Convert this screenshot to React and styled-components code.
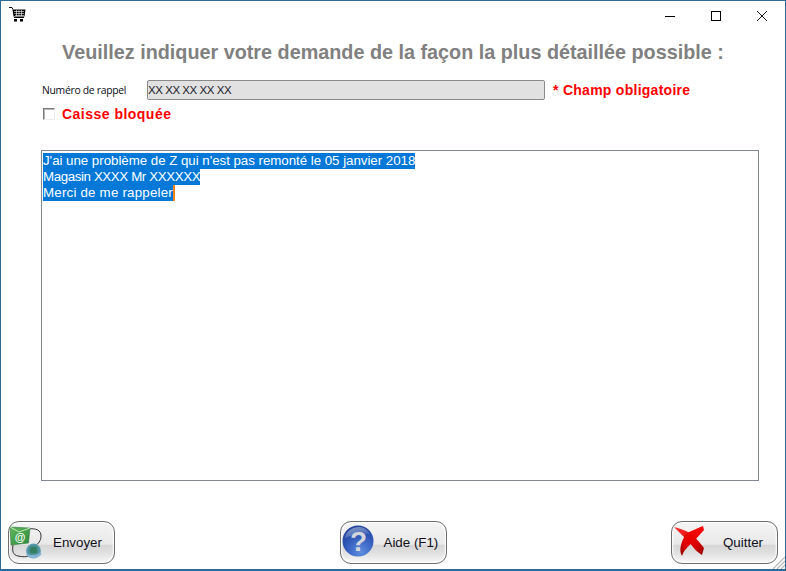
import React from 'react';
import styled, { createGlobalStyle } from 'styled-components';

const Global = createGlobalStyle`
  html, body { margin: 0; padding: 0; background: #fff; }
  * { box-sizing: border-box; }
`;

const Win = styled.div`
  position: relative;
  width: 786px;
  height: 571px;
  border: 1px solid #2f6a94;
  border-bottom-width: 2px;
  background: #fff;
  display: flex;
  flex-direction: column;
  font-family: "Liberation Sans", Arial, sans-serif;
  overflow: hidden;
`;

const TitleBar = styled.div`
  height: 30px;
  display: flex;
  align-items: flex-start;
  justify-content: space-between;
  padding: 6px 0 0 8px;
`;

const Controls = styled.div`
  display: flex;
  margin-top: -6px;
`;

const Ctrl = styled.div`
  width: 46px;
  height: 30px;
  display: flex;
  align-items: center;
  justify-content: center;
`;

const Heading = styled.h1`
  margin: 10px 0 0;
  height: 22px;
  font-size: 19.8px;
  line-height: 22px;
  font-weight: 700;
  color: #808080;
  text-align: center;
  white-space: nowrap;
`;

const Form = styled.div`
  padding: 17px 26px 0 40px;
  display: flex;
  flex-direction: column;
  flex: 1;
`;

const Row = styled.div`
  display: flex;
  align-items: center;
  height: 20px;
`;

const Label = styled.label`
  width: 106px;
  padding-left: 1px;
  font-family: "Open Sans", sans-serif;
  font-size: 10.4px;
  color: #0c0c20;
  white-space: nowrap;
  letter-spacing: -0.3px;
`;

const PhoneInput = styled.div`
  width: 398px;
  height: 20px;
  background: #e1e1e1;
  border: 1px solid #8a8a8a;
  border-radius: 2px;
  font-size: 11.5px;
  line-height: 18px;
  color: #1a1a2a;
  letter-spacing: -0.45px;
`;

const Required = styled.span`
  margin-left: 8px;
  font-size: 14px;
  font-weight: 700;
  color: #ff0000;
  letter-spacing: 0.27px;
  white-space: nowrap;
`;

const CheckRow = styled.div`
  display: flex;
  align-items: center;
  height: 16px;
  margin-top: 6px;
  padding-left: 2px;
`;

const Check = styled.span`
  width: 12px;
  height: 12px;
  background: #fff;
  border-top: 1px solid #7a7a7a;
  border-left: 1px solid #7a7a7a;
  border-right: 1px solid #ececec;
  border-bottom: 1px solid #ececec;
  box-shadow: inset 1px 1px 0 #b4b4b4;
`;

const CheckText = styled.span`
  margin-left: 7px;
  font-size: 14px;
  font-weight: 700;
  color: #ff0000;
  letter-spacing: 0.48px;
`;

const Memo = styled.div`
  margin-top: 28px;
  width: 718px;
  height: 331px;
  border: 1px solid #828790;
  padding: 2px 1px;
  font-size: 13.33px;
  line-height: 16px;
  color: #fff;
`;

const Line = styled.div`
  width: fit-content;
  height: 16px;
  background: #0078d7;
  white-space: nowrap;
  letter-spacing: ${p => p.$spacing || 0}px;
`;

const Caret = styled.span`
  display: inline-block;
  width: 2px;
  height: 16px;
  vertical-align: top;
  background: #f58220;
`;

const Footer = styled.div`
  display: flex;
  justify-content: space-between;
  padding: 0 7px 5px;
  height: 48px;
`;

const Btn = styled.button`
  position: relative;
  width: 107px;
  height: 43px;
  padding: 0;
  border: 1px solid #6e6e6e;
  border-radius: 11px;
  background: linear-gradient(#f4f4f4 0%, #e9e9e9 54%, #d6d6d6 57%, #e0e0e0 75%, #f8f8f8 100%);
  box-shadow: inset 0 0 2px 1px #fff;
  font-family: "Liberation Sans", Arial, sans-serif;
  font-size: 13.33px;
  color: #101018;
`;

const BtnIcon = styled.svg`
  position: absolute;
  left: ${p => p.$left}px;
  top: ${p => p.$top}px;
`;

const BtnText = styled.span`
  position: absolute;
  left: ${p => p.$left}px;
  top: 13px;
  line-height: 15px;
  white-space: nowrap;
`;

const Grip = styled.svg`
  position: absolute;
  right: 0;
  bottom: 0;
`;

function Cart() {
  return (
    <svg width="17" height="15" viewBox="0 0 17 15">
      <path d="M0 .5h3l1 2M5 10.5h10" fill="none" stroke="#000" />
      <path d="M3.5 2.5h13l-1 7h-11z" fill="#000" />
      <path d="M5 4.5h10M5.5 6.5h9.5M6 8.5h9M7.5 3v6M10 3v6M12.5 3v6" stroke="#fff" strokeWidth=".6" fill="none" />
      <rect x="5" y="12" width="3" height="2.5" fill="#000" />
      <rect x="11" y="12" width="3" height="2.5" fill="#000" />
    </svg>
  );
}

function MailIcon() {
  return (
    <BtnIcon $left={-1} $top={3} width="36" height="36" viewBox="0 0 36 36">
      <defs>
        <linearGradient id="env" x1="0" y1="0" x2="1" y2="1">
          <stop offset="0" stopColor="#62b85a" />
          <stop offset="1" stopColor="#2b8a3f" />
        </linearGradient>
        <radialGradient id="globe" cx=".5" cy=".45" r=".6">
          <stop offset="0" stopColor="#3f8f6c" />
          <stop offset=".55" stopColor="#4a8f9a" />
          <stop offset="1" stopColor="#8ab6d2" />
        </radialGradient>
      </defs>
      <path d="M20 4 C28 3 33 5 33 11 C33 16 30 19 28 20 M5 20 C4 26 5 30 10 31 C15 32 18 32 21 31" fill="none" stroke="#333" strokeWidth="1" />
      <path d="M2 2 L22 3 L20.5 18 L3 20 Z" fill="url(#env)" stroke="#1f6d30" strokeWidth=".5" />
      <path d="M2 2 L11 7 L22 3" fill="none" stroke="#d4f0cc" strokeWidth=".9" />
      <text x="12" y="15.5" textAnchor="middle" fontFamily="Liberation Sans" fontWeight="700" fontSize="11" fill="#fff">@</text>
      <circle cx="25.5" cy="26" r="7.5" fill="url(#globe)" />
      <path d="M18 30c3 4 11 4 15 0 1-1 0-3-1-2-3 2-9 3-13 1z" fill="#86b4d4" />
      <rect x="22" y="22" width="7" height="6" rx="1.5" fill="#2f7a58" opacity=".75" />
    </BtnIcon>
  );
}

function HelpIcon() {
  return (
    <BtnIcon $left={0} $top={2} width="34" height="34" viewBox="0 0 34 34">
      <defs>
        <radialGradient id="help" cx=".6" cy=".85" r=".95">
          <stop offset="0" stopColor="#5d8ee0" />
          <stop offset=".55" stopColor="#3058b8" />
          <stop offset="1" stopColor="#1a3a90" />
        </radialGradient>
        <linearGradient id="gloss" x1="0" y1="0" x2=".6" y2="1">
          <stop offset="0" stopColor="#fff" stopOpacity=".5" />
          <stop offset="1" stopColor="#fff" stopOpacity=".08" />
        </linearGradient>
      </defs>
      <circle cx="17" cy="17" r="15.5" fill="url(#help)" />
      <path d="M4 14 C5 7 11 3 18 3 C23 3 27 6 29 10 C20 9 11 11 4 14 Z" fill="url(#gloss)" />
      <text x="17.5" y="27" textAnchor="middle" fontFamily="Liberation Sans" fontWeight="700" fontSize="28" fill="#d3d6dc">?</text>
    </BtnIcon>
  );
}

function QuitIcon() {
  return (
    <BtnIcon $left={-1} $top={3} width="36" height="34" viewBox="0 0 36 34">
      <defs>
        <linearGradient id="xa" x1="1" y1="0" x2="0" y2="1">
          <stop offset="0" stopColor="#ff0a0a" />
          <stop offset=".7" stopColor="#e00000" />
          <stop offset="1" stopColor="#8c0000" />
        </linearGradient>
        <linearGradient id="xb" x1="0" y1="0" x2="1" y2="1">
          <stop offset="0" stopColor="#ff3030" />
          <stop offset=".7" stopColor="#d80000" />
          <stop offset="1" stopColor="#900000" />
        </linearGradient>
      </defs>
      <path d="M3 2 C8 3 13 5 17 7 C24 11 29 18 33 23 L31 30 C28 28 25 26 22 22 L17 16 L12 11 Z" fill="url(#xb)" />
      <path d="M16 8 C22 5 27 3 32 1 L33 5 C30 8 27 12 24 15 C20 19 17 21 15 24 C13 26 12 28 11 31 C9 28 9 24 10 20 C11 16 13 11 16 8 Z" fill="url(#xa)" />
    </BtnIcon>
  );
}

export default function App() {
  return (
    <>
      <Global />
      <Win>
        <TitleBar>
          <Cart />
          <Controls>
            <Ctrl>
              <svg width="10" height="10" viewBox="0 0 10 10"><path d="M0 5.5h10" stroke="#000" /></svg>
            </Ctrl>
            <Ctrl>
              <svg width="10" height="10" viewBox="0 0 10 10"><rect x=".5" y=".5" width="9" height="9" fill="none" stroke="#000" /></svg>
            </Ctrl>
            <Ctrl>
              <svg width="10" height="10" viewBox="0 0 10 10"><path d="M0 0l10 10M10 0L0 10" stroke="#000" strokeWidth=".9" /></svg>
            </Ctrl>
          </Controls>
        </TitleBar>
        <Heading>Veuillez indiquer votre demande de la façon la plus détaillée possible :</Heading>
        <Form>
          <Row>
            <Label>Numéro de rappel</Label>
            <PhoneInput>XX XX XX XX XX</PhoneInput>
            <Required>* Champ obligatoire</Required>
          </Row>
          <CheckRow>
            <Check />
            <CheckText>Caisse bloquée</CheckText>
          </CheckRow>
          <Memo>
            <Line $spacing={-0.04}>J'ai une problème de Z qui n'est pas remonté le 05 janvier 2018</Line>
            <Line $spacing={-0.4}>Magasin XXXX Mr XXXXXX</Line>
            <Line $spacing={0.2}>Merci de me rappeler<Caret /></Line>
          </Memo>
        </Form>
        <Footer>
          <Btn><MailIcon /><BtnText $left={44}>Envoyer</BtnText></Btn>
          <Btn><HelpIcon /><BtnText $left={43}>Aide (F1)</BtnText></Btn>
          <Btn><QuitIcon /><BtnText $left={51}>Quitter</BtnText></Btn>
        </Footer>
        <Grip width="14" height="14" viewBox="0 0 14 14">
          <path d="M14 2L2 14M14 6L6 14M14 10l-4 4" stroke="#b5b5b5" strokeWidth="1.2" />
        </Grip>
      </Win>
    </>
  );
}
